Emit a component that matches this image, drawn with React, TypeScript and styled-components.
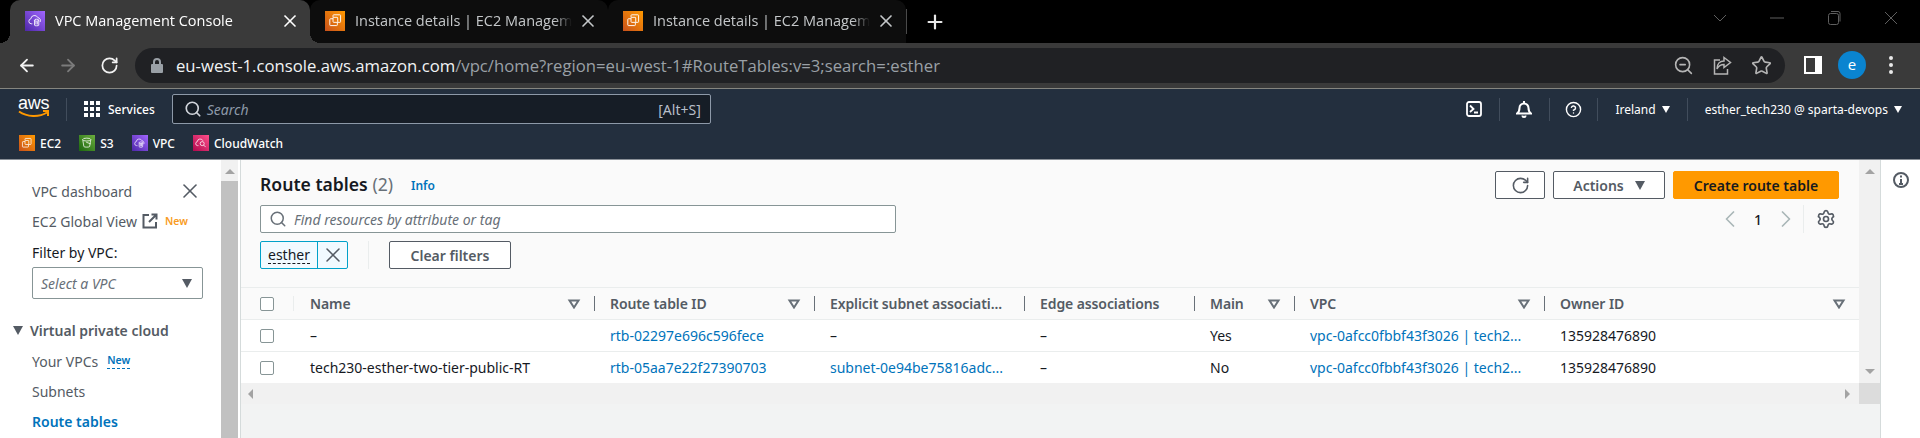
import React from "react";
import styled, {createGlobalStyle} from "styled-components";
import {
    ArrowLeft, ArrowRight, ChevronLeft, ChevronRight, CircleHelp, Plus, RotateCw, Search, Settings, Star, X, ZoomOut,
} from "lucide-react";

const GlobalStyle = createGlobalStyle`
  html, body {
    margin: 0;
    padding: 0;
    background: #fff;
  }
  * {
    box-sizing: border-box;
  }
`;

const ember = `"Noto Sans", "Open Sans", Arial, sans-serif`;
const chrome = `"Open Sans", "Noto Sans", Arial, sans-serif`;

const Page = styled.div`
  width: 1920px;
  height: 438px;
  overflow: hidden;
  display: flex;
  flex-direction: column;
  font-family: ${ember};
  font-size: 14px;
  color: #16191f;
`;

/* browser chrome */
const TabStrip = styled.div`
  height: 43px;
  flex: none;
  background: #000;
  display: flex;
  padding-left: 10px;
`;

const Tab = styled.div<{$active?: boolean}>`
  position: relative;
  width: ${p => p.$active ? 300 : 298}px;
  flex: none;
  height: 43px;
  display: flex;
  align-items: center;
  padding: 0 10px 2px 15px;
  gap: 10px;
  color: ${p => p.$active ? "#fff" : "#c4c7c9"};
  background: ${p => p.$active ? "#3a3a3a" : "#0d0d0d"};
  border-radius: 10px 10px 0 0;
  font-family: ${chrome};
  font-size: 14.5px;

  ${p => p.$active && `
    &::before, &::after {
      content: "";
      position: absolute;
      bottom: 0;
      width: 10px;
      height: 10px;
      z-index: 1;
    }
    &::before {
      left: -10px;
      background: radial-gradient(circle at 0 0, transparent 10px, #3a3a3a 10px);
    }
    &::after {
      right: -10px;
      background: radial-gradient(circle at 100% 0, transparent 10px, #3a3a3a 10px);
    }
  `}
`;

const TabTitle = styled.span`
  flex: 1;
  overflow: hidden;
  white-space: nowrap;
  margin-right: -4px;
  mask-image: linear-gradient(to right, #000 92%, transparent 100%);
`;

const TabDivider = styled.div`
  width: 1px;
  height: 25px;
  margin: 9px 0 0 0;
  background: #4a4a4a;
`;

const NewTab = styled.div`
  width: 56px;
  height: 43px;
  flex: none;
  display: flex;
  align-items: center;
  justify-content: center;
  color: #e8e8e8;
`;

const WindowButtons = styled.div`
  margin-left: auto;
  display: flex;
  color: #5f5f5f;
  height: 36px;
  align-items: center;
  padding-right: 21px;
  gap: 41px;
`;

const Toolbar = styled.div`
  height: 46px;
  flex: none;
  background: #3a3a3a;
  border-bottom: 1px solid #85857f;
  display: flex;
  align-items: center;
  padding: 0 0 1px 17px;
  color: #fff;
`;

const NavButton = styled.div<{$dim?: boolean; $gap?: number}>`
  width: 20px;
  height: 24px;
  flex: none;
  margin-right: ${p => p.$gap ?? 21}px;
  display: flex;
  align-items: center;
  justify-content: center;
  color: ${p => p.$dim ? "#7b7b7b" : "#f2f2f2"};
`;

const Omnibox = styled.div`
  width: 1650px;
  height: 35px;
  margin-left: -4px;
  flex: none;
  border-radius: 18px;
  background: #202124;
  display: flex;
  align-items: center;
  padding: 0 13px 0 15px;
  font-family: ${chrome};
  font-size: 16.7px;
  color: #9aa0a6;
`;

const Url = styled.span`
  margin-left: 12px;
  flex: 1;
  white-space: nowrap;
  b {
    font-weight: 400;
    color: #f1f3f4;
  }
`;

const OmniIcons = styled.div`
  display: flex;
  align-items: center;
  gap: 18px;
  color: #b5b5b5;
`;

const Avatar = styled.div`
  width: 28px;
  height: 28px;
  flex: none;
  margin: 0 0 0 16px;
  border-radius: 50%;
  background: #0a84d0;
  color: #fff;
  display: flex;
  align-items: center;
  justify-content: center;
  font-size: 15px;
  font-family: ${chrome};
  padding-bottom: 2px;
`;

/* aws console header */
const ConsoleHeader = styled.div`
  height: 71px;
  flex: none;
  background: #232f3e;
  border-bottom: 1px solid #8a9097;
  color: #fff;
  display: flex;
  flex-direction: column;
`;

const GlobalNav = styled.div`
  height: 40px;
  flex: none;
  display: flex;
  align-items: center;
  padding-left: 18px;
  font-size: 12px;
`;

const AwsMark = styled.div`
  width: 32px;
  height: 30px;
  flex: none;
  position: relative;
  font-family: "Liberation Sans", Arial, sans-serif;
  font-size: 18px;
  line-height: 18px;
  letter-spacing: -0.3px;
  color: #fff;
  svg {
    position: absolute;
    left: 0;
    top: 16px;
  }
`;

const NavRule = styled.div<{$left?: number; $right?: number}>`
  width: 1px;
  height: 23px;
  flex: none;
  background: #414d5c;
  margin: 0 ${p => p.$right ?? 24}px 0 ${p => p.$left ?? 24}px;
`;

const ServicesLink = styled.div`
  display: flex;
  align-items: center;
  gap: 8px;
  font-weight: 500;
  white-space: nowrap;
`;

const Waffle = styled.div`
  display: grid;
  grid-template-columns: repeat(3, 4px);
  grid-auto-rows: 4px;
  gap: 2px;
  i {
    background: #fff;
  }
`;

const ConsoleSearch = styled.div`
  width: 539px;
  height: 30px;
  flex: none;
  margin-left: 17px;
  background: #161d26;
  border: 1px solid #8d99a8;
  border-radius: 2px;
  display: flex;
  align-items: center;
  padding: 0 9px 0 11px;
  gap: 5px;
  em {
    flex: 1;
    color: #8d99a8;
    font-size: 14px;
  }
  span {
    color: #b6bec9;
    font-size: 14px;
  }
`;

const GlobalRight = styled.div`
  margin-left: auto;
  display: flex;
  align-items: center;
  padding-right: 18px;
`;

const Caret = styled.span<{$color?: string; $size?: number}>`
  display: inline-block;
  width: 0;
  height: 0;
  flex: none;
  border-left: ${p => (p.$size ?? 8) / 2 + 1}px solid transparent;
  border-right: ${p => (p.$size ?? 8) / 2 + 1}px solid transparent;
  border-top: ${p => p.$size ?? 8}px solid ${p => p.$color ?? "#fff"};
`;

const MenuLabel = styled.div`
  display: flex;
  align-items: center;
  gap: 6px;
  white-space: nowrap;
  font-size: 12px;
`;

const FavBar = styled.div`
  height: 30px;
  flex: none;
  display: flex;
  align-items: flex-start;
  padding: 4px 0 0 19px;
  gap: 18px;
`;

const Fav = styled.div`
  display: flex;
  align-items: center;
  gap: 5px;
  font-size: 12px;
  font-weight: 500;
  height: 20px;
`;

const ServiceBadge = styled.div<{$from: string; $to: string; $size: number}>`
  width: ${p => p.$size}px;
  height: ${p => p.$size}px;
  flex: none;
  background: linear-gradient(45deg, ${p => p.$from}, ${p => p.$to});
  display: flex;
  align-items: center;
  justify-content: center;
  color: #fff;
`;

/* body */
const Body = styled.div`
  flex: 1;
  display: flex;
  min-height: 0;
`;

const SideNav = styled.div`
  width: 221px;
  flex: none;
  padding: 16px 17px 0 32px;
  background: #fff;
  color: #545b64;
`;

const SideRow = styled.div<{$strong?: boolean; $link?: boolean}>`
  height: 30px;
  display: flex;
  align-items: center;
  white-space: nowrap;
  font-weight: ${p => p.$strong ? 600 : 400};
  color: ${p => p.$link ? "#0073bb" : "#545b64"};
`;

const CloseBtn = styled.div`
  margin-left: auto;
  display: flex;
  color: #545b64;
  margin-right: 2px;
`;

const NewTag = styled.span<{$blue?: boolean}>`
  font-size: 10.5px;
  font-weight: 600;
  color: ${p => p.$blue ? "#0073bb" : "#f89c24"};
  margin-left: ${p => p.$blue ? 9 : 7}px;
  border-bottom: ${p => p.$blue ? "1px dashed #0073bb" : "none"};
  line-height: 15px;
`;

const FilterLabel = styled(SideRow)`
  color: #16191f;
  margin-top: 1px;
`;

const VpcSelect = styled.div`
  width: 171px;
  height: 32px;
  border: 1px solid #879596;
  border-radius: 2px;
  display: flex;
  align-items: center;
  justify-content: space-between;
  padding: 0 10px 0 8px;
  font-style: italic;
  color: #687078;
  background: #fff;
`;

const SectionHead = styled(SideRow)`
  margin: 16px 0 1px -19px;
  color: #545b64;
  gap: 7px;
`;

const Scrollbar = styled.div<{$width: number}>`
  width: ${p => p.$width}px;
  flex: none;
  background: #f1f1f1;
  display: flex;
  flex-direction: column;
  align-items: center;
  color: #a3a3a3;
`;

const ScrollThumb = styled.div`
  align-self: stretch;
  flex: 1;
  margin-top: 7px;
  background: #c1c1c1;
`;

const ArrowUp = styled.span`
  width: 0;
  height: 0;
  flex: none;
  margin-top: 9px;
  border-left: 5px solid transparent;
  border-right: 5px solid transparent;
  border-bottom: 5px solid #a3a3a3;
`;

const ArrowDown = styled(ArrowUp)`
  margin: auto 0 9px;
  border-bottom: none;
  border-top: 5px solid #a3a3a3;
`;

const SideGutter = styled.div`
  width: 3px;
  flex: none;
  background: #fff;
  border-right: 1px solid #d5dbdb;
`;

const MainColumn = styled.div`
  width: 1639px;
  flex: none;
  display: flex;
  flex-direction: column;
  background: #f2f3f3;
`;

const MainTop = styled.div`
  height: 223px;
  flex: none;
  display: flex;
`;

const Content = styled.div`
  width: 1618px;
  flex: none;
  background: #fafafa;
  display: flex;
  flex-direction: column;
`;

const Controls = styled.div`
  height: 127px;
  flex: none;
  padding: 11px 20px 0 19px;
  display: grid;
  grid-template-columns: 1fr auto;
  align-content: start;
`;

const TitleRow = styled.div`
  display: flex;
  align-items: center;
  height: 28px;
  white-space: nowrap;
`;

const Title = styled.h1`
  margin: -2px 0 0;
  font-size: 17.6px;
  font-weight: 600;
  color: #16191f;
  span {
    font-weight: 400;
    color: #687078;
  }
`;

const InfoLink = styled.a`
  margin: 0 0 0 18px;
  font-size: 12px;
  font-weight: 600;
  color: #0073bb;
`;

const ActionRow = styled.div`
  display: flex;
  gap: 8px;
  height: 28px;
`;

const Button = styled.div<{$primary?: boolean; $width: number}>`
  width: ${p => p.$width}px;
  height: 28px;
  flex: none;
  display: flex;
  align-items: center;
  justify-content: center;
  gap: 11px;
  font-weight: 600;
  font-size: 14px;
  white-space: nowrap;
  border-radius: 2px;
  border: 1px solid ${p => p.$primary ? "#ff9900" : "#545b64"};
  background: ${p => p.$primary ? "#ff9900" : "#fff"};
  color: ${p => p.$primary ? "#16191f" : "#545b64"};
`;

const FindInput = styled.div`
  width: 636px;
  height: 28px;
  margin-top: 6px;
  background: #fff;
  border: 1px solid #879596;
  border-radius: 2px;
  display: flex;
  align-items: center;
  padding: 0 8px;
  gap: 7px;
  color: #687078;
  em {
    font-size: 14px;
  }
`;

const Pager = styled.div`
  height: 28px;
  margin-top: 6px;
  display: flex;
  align-items: center;
  justify-content: flex-end;
  color: #aab7b8;
  padding-right: 3px;
  b {
    width: 28px;
    text-align: center;
    font-weight: 500;
    color: #16191f;
  }
  i {
    width: 1px;
    height: 28px;
    background: #eaeded;
    margin: 0 12px 0 3px;
  }
`;

const FilterRow = styled.div`
  grid-column: 1 / span 2;
  margin-top: 8px;
  display: flex;
  align-items: center;
`;

const Token = styled.div`
  width: 88px;
  height: 28px;
  border: 1px solid #00a1c9;
  border-radius: 2px;
  background: #f1faff;
  display: flex;
  span {
    flex: 1;
    display: flex;
    align-items: center;
    justify-content: center;
    u {
      text-decoration: none;
      border-bottom: 1px dashed #16191f;
      line-height: 17px;
      color: #16191f;
    }
  }
  div {
    width: 30px;
    border-left: 1px solid #00a1c9;
    display: flex;
    align-items: center;
    justify-content: center;
    color: #545b64;
  }
`;

const FilterRule = styled.div`
  width: 1px;
  height: 28px;
  background: #eaeded;
  margin: 0 20px;
`;

const TableRow = styled.div<{$head?: boolean}>`
  display: grid;
  grid-template-columns: 53px 300px 220px 210px 170px 100px 250px 315px;
  height: 32px;
  align-items: center;
  background: ${p => p.$head ? "#fafafa" : "#fff"};
  border-top: 1px solid #eaeded;
`;

const CheckCell = styled.div`
  display: flex;
  align-items: center;
  height: 15px;
  padding-left: 19px;
  border-right: 1px solid transparent;
`;

const HeadCheckCell = styled(CheckCell)`
  border-right-color: #eaeded;
`;

const Checkbox = styled.span`
  width: 14px;
  height: 14px;
  border: 1px solid #879596;
  border-radius: 2px;
  background: #fff;
`;

const HeadCell = styled.div<{$first?: boolean}>`
  height: 15px;
  display: flex;
  align-items: center;
  justify-content: space-between;
  padding: 0 13px 0 ${p => p.$first ? 16 : 15}px;
  border-left: ${p => p.$first ? "none" : "1px solid #687078"};
  font-weight: 600;
  font-size: 14px;
  letter-spacing: -0.1px;
  color: #545b64;
  white-space: nowrap;
`;

const Cell = styled.div<{$link?: boolean}>`
  padding-left: 16px;
  white-space: nowrap;
  color: ${p => p.$link ? "#0073bb" : "#16191f"};
`;

const HScroll = styled.div`
  height: 21px;
  flex: none;
  display: flex;
  align-items: center;
  background: #f1f1f1;
`;

const ArrowLeftTri = styled.span`
  width: 0;
  height: 0;
  margin-left: 7px;
  border-top: 5px solid transparent;
  border-bottom: 5px solid transparent;
  border-right: 5px solid #a3a3a3;
`;

const ArrowRightTri = styled.span`
  width: 0;
  height: 0;
  margin-left: auto;
  margin-right: 9px;
  border-top: 5px solid transparent;
  border-bottom: 5px solid transparent;
  border-left: 5px solid #a3a3a3;
`;

const ScrollCorner = styled.div`
  width: 21px;
  height: 21px;
  flex: none;
  background: #dcdcdc;
`;

const InfoPanel = styled.div`
  flex: 1;
  background: #fff;
  border-left: 1px solid #d5dbdb;
  display: flex;
  justify-content: center;
  padding-top: 12px;
  color: #545b64;
`;

const CloudIcon = ({size}: {size: number}) => (
    <svg width={size * 0.72} height={size * 0.72} viewBox="0 0 20 20" fill="none" stroke="currentColor" strokeWidth="1.2">
        <path d="M6 15H4.5a3.5 3.5 0 0 1-.6-6.9 5.2 5.2 0 0 1 9.9-1.6 4 4 0 0 1 3 6"/>
        <ellipse cx="12" cy="10" rx="3" ry="1.4"/>
        <path d="M9 10v7c0 1 6 1 6 0v-7M11 12v4M13 12v4"/>
    </svg>
);

const ChipIcon = ({size}: {size: number}) => (
    <svg width={size * 0.72} height={size * 0.72} viewBox="0 0 20 20" fill="none" stroke="currentColor" strokeWidth="1.3">
        <path d="M7 6V3.5A1 1 0 0 1 8 2.5h8.5a1 1 0 0 1 1 1V12a1 1 0 0 1-1 1H13"/>
        <rect x="7" y="6" width="6.5" height="7" rx="1"/>
        <path d="M7 8H3.5a1 1 0 0 0-1 1v7.5a1 1 0 0 0 1 1H12a1 1 0 0 0 1-1V13"/>
    </svg>
);

const BucketIcon = ({size}: {size: number}) => (
    <svg width={size * 0.72} height={size * 0.72} viewBox="0 0 20 20" fill="none" stroke="currentColor" strokeWidth="1.3">
        <ellipse cx="10" cy="4.5" rx="7" ry="2.5"/>
        <path d="M3 4.5l2 12c.3 1.5 9.7 1.5 10 0l2-12M9 9l8 3"/>
    </svg>
);

const WatchIcon = ({size}: {size: number}) => (
    <svg width={size * 0.72} height={size * 0.72} viewBox="0 0 20 20" fill="none" stroke="currentColor" strokeWidth="1.3">
        <path d="M6 15H4.5a3.5 3.5 0 0 1-.6-6.9 5.2 5.2 0 0 1 9.9-1.6"/>
        <circle cx="12.5" cy="11.5" r="3.5"/>
        <path d="M15 14l3.5 3.5"/>
    </svg>
);

const vpcBadge = {$from: "#4d27a8", $to: "#a166ff"};
const ec2Badge = {$from: "#c8511b", $to: "#ff9900"};
const s3Badge = {$from: "#1b660f", $to: "#6cae3e"};
const cwBadge = {$from: "#b0084d", $to: "#ff4f8b"};

const SortIcon = () => (
    <svg width="14" height="10" viewBox="0 0 14 10" fill="none" stroke="#687078" strokeWidth="2">
        <path d="M2.5 1.5h9L7 8.5z"/>
    </svg>
);

const ExternalIcon = () => (
    <svg width="16" height="16" viewBox="0 0 16 16" fill="none" stroke="#545b64" strokeWidth="2" style={{marginLeft: 5}}>
        <path d="M7 2H1.5v12.5H14V9M9.5 1.5h5v5M14 2L7 9"/>
    </svg>
);

const App = () => {
    const columns = ["Name", "Route table ID", "Explicit subnet associati...", "Edge associations", "Main", "VPC", "Owner ID"];
    const sortable = [true, true, false, false, true, true, true];
    const rows = [
        {name: "–", id: "rtb-02297e696c596fece", subnet: "–", main: "Yes"},
        {name: "tech230-esther-two-tier-public-RT", id: "rtb-05aa7e22f27390703", subnet: "subnet-0e94be75816adc...", main: "No"},
    ];

    return (
        <Page>
            <GlobalStyle/>
            <TabStrip>
                <Tab $active>
                    <ServiceBadge {...vpcBadge} $size={20}><CloudIcon size={20}/></ServiceBadge>
                    <TabTitle>VPC Management Console</TabTitle>
                    <X size={20} strokeWidth={2}/>
                </Tab>
                <Tab>
                    <ServiceBadge {...ec2Badge} $size={20}><ChipIcon size={20}/></ServiceBadge>
                    <TabTitle>Instance details | EC2 Management Console</TabTitle>
                    <X size={20} strokeWidth={2}/>
                </Tab>
                <Tab>
                    <ServiceBadge {...ec2Badge} $size={20}><ChipIcon size={20}/></ServiceBadge>
                    <TabTitle>Instance details | EC2 Management Console</TabTitle>
                    <X size={20} strokeWidth={2}/>
                </Tab>
                <TabDivider/>
                <NewTab><Plus size={22} strokeWidth={2.4}/></NewTab>
                <WindowButtons>
                    <svg width="16" height="16" viewBox="0 0 16 16" fill="none" stroke="currentColor"><path d="M2 5l6 6 6-6"/></svg>
                    <svg width="16" height="16" viewBox="0 0 16 16" fill="none" stroke="currentColor"><path d="M1 8h14"/></svg>
                    <svg width="16" height="16" viewBox="0 0 16 16" fill="none" stroke="currentColor"><rect x="2.5" y="3.5" width="10" height="11" rx="2"/><path d="M5 1.5h7a2 2 0 0 1 2 2v8"/></svg>
                    <svg width="16" height="16" viewBox="0 0 16 16" fill="none" stroke="currentColor"><path d="M2 2l12 12M14 2L2 14"/></svg>
                </WindowButtons>
            </TabStrip>

            <Toolbar>
                <NavButton><ArrowLeft size={21} strokeWidth={2.2}/></NavButton>
                <NavButton $dim><ArrowRight size={21} strokeWidth={2.2}/></NavButton>
                <NavButton $gap={20}><RotateCw size={19} strokeWidth={2.2}/></NavButton>
                <Omnibox>
                    <svg width="14" height="16" viewBox="0 0 14 16" fill="#9aa0a6"><path d="M3 7V5a4 4 0 0 1 8 0v2h1a1 1 0 0 1 1 1v7a1 1 0 0 1-1 1H2a1 1 0 0 1-1-1V8a1 1 0 0 1 1-1zM5 7h4V5a2 2 0 0 0-4 0z"/></svg>
                    <Url><b>eu-west-1.console.aws.amazon.com</b>/vpc/home?region=eu-west-1#RouteTables:v=3;search=:esther</Url>
                    <OmniIcons>
                        <ZoomOut size={21} strokeWidth={1.8}/>
                        <svg width="21" height="21" viewBox="0 0 21 21" fill="none" stroke="currentColor" strokeWidth="1.5"><path d="M8 5H2.5v14h13v-5M12 2.5l6.5 5-6.5 5V9.5c-3 0-5.5 1.5-7 4.5 0-5 3-8 7-8z"/></svg>
                        <Star size={21} strokeWidth={1.9}/>
                    </OmniIcons>
                </Omnibox>
                <svg width="18" height="18" viewBox="0 0 18 18" style={{marginLeft: 19}}><path fill="#fff" fillRule="evenodd" d="M0 0h18v18H0zM2 2v14h9V2z"/></svg>
                <Avatar>e</Avatar>
                <svg width="6" height="20" viewBox="0 0 6 20" fill="#e8e8e8" style={{marginLeft: 22}}><circle cx="3" cy="3" r="2"/><circle cx="3" cy="10" r="2"/><circle cx="3" cy="17" r="2"/></svg>
            </Toolbar>

            <ConsoleHeader>
                <GlobalNav>
                    <AwsMark>
                        aws
                        <svg width="32" height="10" viewBox="0 0 32 10" fill="none" stroke="#ff9900" strokeWidth="2"><path d="M1 1.5c8 5.5 20 6 28 1M25 1h5v5"/></svg>
                    </AwsMark>
                    <NavRule $left={16} $right={17}/>
                    <ServicesLink>
                        <Waffle>{Array.from({length: 9}, (_, i) => <i key={i}/>)}</Waffle>
                        Services
                    </ServicesLink>
                    <ConsoleSearch>
                        <Search size={18} strokeWidth={2.2} color="#d1d5db"/>
                        <em>Search</em>
                        <span>[Alt+S]</span>
                    </ConsoleSearch>
                    <GlobalRight>
                        <svg width="16" height="16" viewBox="0 0 16 16" fill="none" stroke="#fff" strokeWidth="1.8"><rect x="1" y="1" width="14" height="14" rx="2"/><path d="M4 4.5L7.5 8 4 11M8 11.5h4"/></svg>
                        <NavRule $left={17} $right={16}/>
                        <svg width="16" height="18" viewBox="0 0 16 18" fill="none" stroke="#fff" strokeWidth="2"><path d="M1 13.5h14c-2-1.5-2.500-3-2.500-5.500a4.500 4.500 0 0 0-9 0c0 2.500-.5 4-2.500 5.500zM6.500 15.500a1.500 1.500 0 0 0 3 0M8 1v2"/></svg>
                        <NavRule $left={17} $right={15}/>
                        <CircleHelp size={17} strokeWidth={2}/>
                        <NavRule $left={15} $right={17}/>
                        <MenuLabel>Ireland <Caret $size={7}/></MenuLabel>
                        <NavRule $left={17} $right={17}/>
                        <MenuLabel>esther_tech230 @ sparta-devops <Caret $size={7}/></MenuLabel>
                    </GlobalRight>
                </GlobalNav>
                <FavBar>
                    <Fav><ServiceBadge {...ec2Badge} $size={16}><ChipIcon size={16}/></ServiceBadge>EC2</Fav>
                    <Fav><ServiceBadge {...s3Badge} $size={16}><BucketIcon size={16}/></ServiceBadge>S3</Fav>
                    <Fav><ServiceBadge {...vpcBadge} $size={16}><CloudIcon size={16}/></ServiceBadge>VPC</Fav>
                    <Fav><ServiceBadge {...cwBadge} $size={16}><WatchIcon size={16}/></ServiceBadge>CloudWatch</Fav>
                </FavBar>
            </ConsoleHeader>

            <Body>
                <SideNav>
                    <SideRow>VPC dashboard<CloseBtn><X size={24} strokeWidth={1.6}/></CloseBtn></SideRow>
                    <SideRow>EC2 Global View<ExternalIcon/><NewTag>New</NewTag></SideRow>
                    <FilterLabel>Filter by VPC:</FilterLabel>
                    <VpcSelect>Select a VPC<Caret $color="#545b64" $size={9}/></VpcSelect>
                    <SectionHead $strong><Caret $color="#545b64" $size={9}/>Virtual private cloud</SectionHead>
                    <SideRow>Your VPCs<NewTag $blue>New</NewTag></SideRow>
                    <SideRow>Subnets</SideRow>
                    <SideRow $link $strong>Route tables</SideRow>
                </SideNav>
                <Scrollbar $width={17}>
                    <ArrowUp/>
                    <ScrollThumb/>
                </Scrollbar>
                <SideGutter/>
                <MainColumn>
                    <MainTop>
                        <Content>
                            <Controls>
                                <TitleRow>
                                    <Title>Route tables <span>(2)</span></Title>
                                    <InfoLink>Info</InfoLink>
                                </TitleRow>
                                <ActionRow>
                                    <Button $width={50}><RotateCw size={19} strokeWidth={2}/></Button>
                                    <Button $width={112}>Actions<Caret $color="#545b64" $size={9}/></Button>
                                    <Button $width={166} $primary>Create route table</Button>
                                </ActionRow>
                                <FindInput>
                                    <Search size={18} strokeWidth={2}/>
                                    <em>Find resources by attribute or tag</em>
                                </FindInput>
                                <Pager>
                                    <ChevronLeft size={28} strokeWidth={1.5}/>
                                    <b>1</b>
                                    <ChevronRight size={28} strokeWidth={1.5}/>
                                    <i/>
                                    <Settings size={20} strokeWidth={2} color="#545b64"/>
                                </Pager>
                                <FilterRow>
                                    <Token>
                                        <span><u>esther</u></span>
                                        <div><X size={24} strokeWidth={1.5}/></div>
                                    </Token>
                                    <FilterRule/>
                                    <Button $width={122}>Clear filters</Button>
                                </FilterRow>
                            </Controls>
                            <TableRow $head>
                                <HeadCheckCell><Checkbox/></HeadCheckCell>
                                {columns.map((col, i) => (
                                    <HeadCell key={col} $first={i === 0}>
                                        {col}
                                        {sortable[i] && <SortIcon/>}
                                    </HeadCell>
                                ))}
                            </TableRow>
                            {rows.map(row => (
                                <TableRow key={row.id}>
                                    <CheckCell><Checkbox/></CheckCell>
                                    <Cell>{row.name}</Cell>
                                    <Cell $link>{row.id}</Cell>
                                    <Cell $link={row.subnet !== "–"}>{row.subnet}</Cell>
                                    <Cell>–</Cell>
                                    <Cell>{row.main}</Cell>
                                    <Cell $link>vpc-0afcc0fbbf43f3026 | tech2...</Cell>
                                    <Cell>135928476890</Cell>
                                </TableRow>
                            ))}
                        </Content>
                        <Scrollbar $width={21}>
                            <ArrowUp/>
                            <ArrowDown/>
                        </Scrollbar>
                    </MainTop>
                    <HScroll>
                        <ArrowLeftTri/>
                        <ArrowRightTri/>
                        <ScrollCorner/>
                    </HScroll>
                </MainColumn>
                <InfoPanel>
                    <svg width="16" height="16" viewBox="0 0 16 16" fill="none" stroke="currentColor" strokeWidth="2"><circle cx="8" cy="8" r="7"/><path d="M8 7v5M6 12h4M8 3.5v2"/></svg>
                </InfoPanel>
            </Body>
        </Page>
    );
};

export default App;
